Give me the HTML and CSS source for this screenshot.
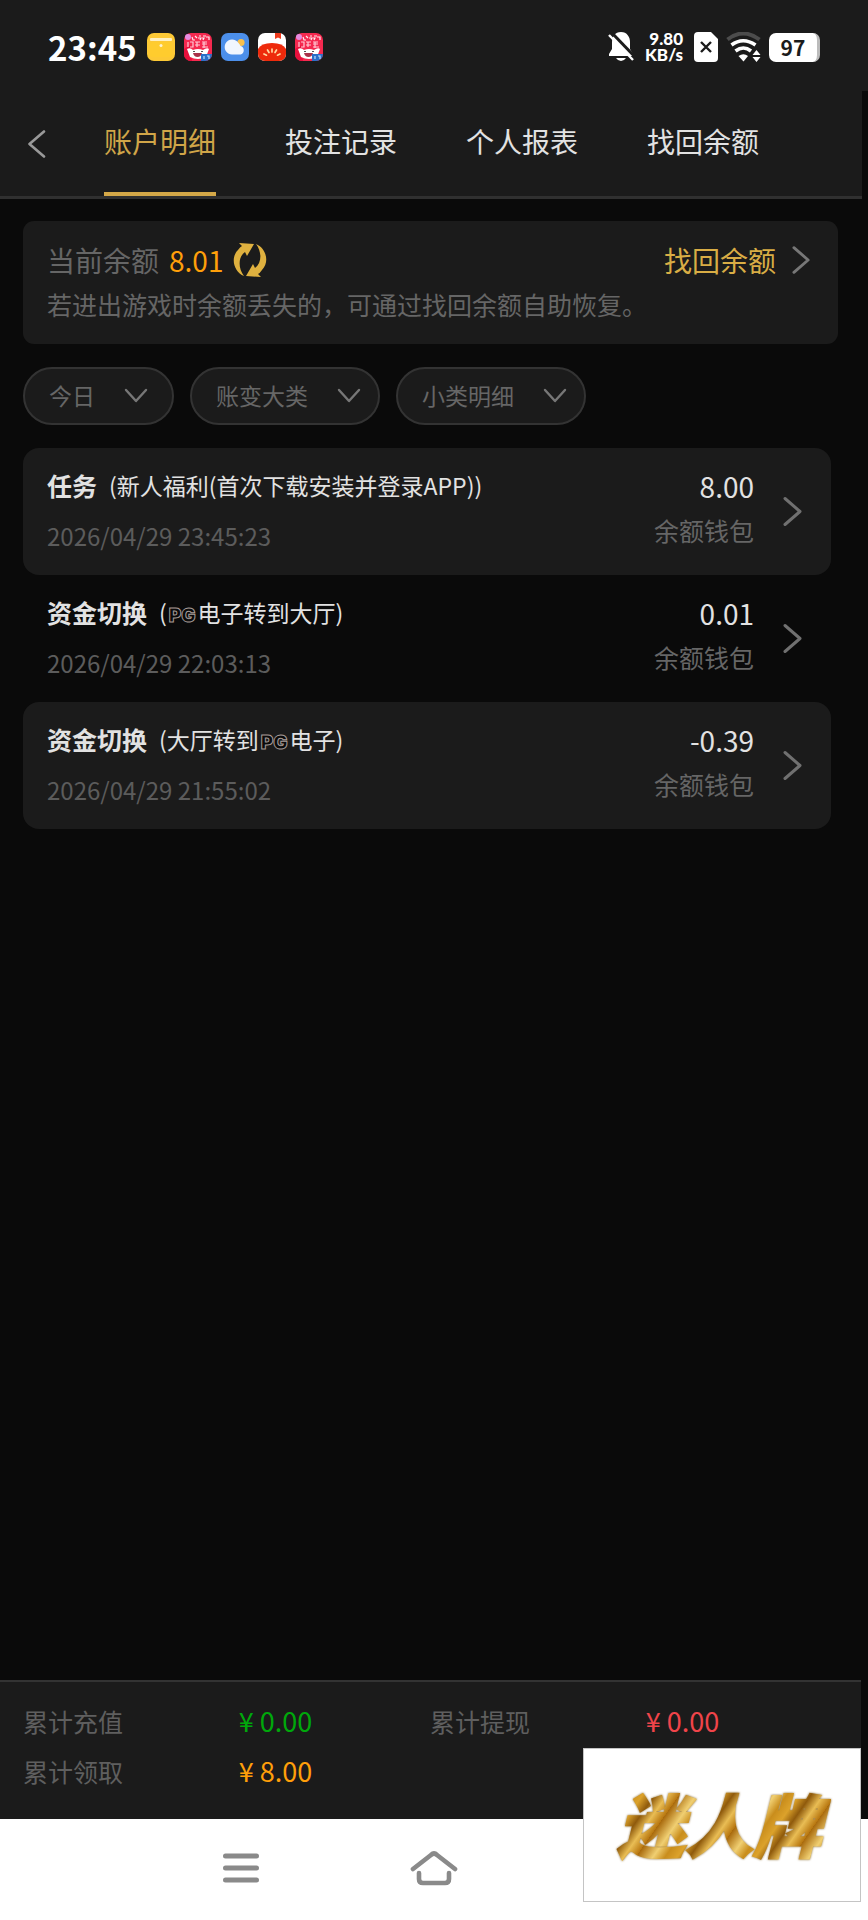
FILE: index.html
```html
<!DOCTYPE html>
<html lang="zh-CN">
<head>
  <meta charset="UTF-8">
  <meta name="viewport" content="width=device-width, initial-scale=1.0">
  <title>账户明细</title>
  <link rel="stylesheet" href="styles.css">
</head>
<body>

  <!-- Icons used more than once -->
  <svg class="sprite" aria-hidden="true">
    <symbol id="right" viewBox="0 0 20 30">
      <path d="M2 2 L17 15 L2 28" fill="none" stroke="currentColor" stroke-width="3" stroke-linecap="round" stroke-linejoin="round"/>
    </symbol>
    <symbol id="down" viewBox="0 0 24 16">
      <path d="M2 2 L12 13 L22 2" fill="none" stroke="currentColor" stroke-width="2.4" stroke-linecap="round" stroke-linejoin="round"/>
    </symbol>
    <symbol id="promo" viewBox="0 0 28 28">
      <rect width="28" height="28" rx="7" fill="#f5294f"/>
      <path d="M0 16 L6 12 L8 28 H7 A7 7 0 0 1 0 21 Z" fill="#e8103c"/>
      <circle cx="4" cy="4" r="3" fill="#e58be0"/>
      <path d="M8 4 l1 3 h2 M11 3 l2 2 M15 3 h2 M14 5 h3 l-1 2 M19 3 h3 M18 5 h2 l-1 2 M22 4 h3 v3" stroke="#ffe9ee" stroke-width="1.2" fill="none"/>
      <path d="M4 9 v5 M6 9 h3 v5 h-3 M11 9 h5 M11 12 h5 M13 9 v5 M18 9 h5 M18 11 h5 M20 9 v6 M18 14 h6" stroke="#ffc9d4" stroke-width="1.2" fill="none"/>
      <path d="M3 16 Q6 14 9 17 Q14 15 19 17 Q23 14 25 16 L22 24 Q14 28 6 24 Z" fill="#fff"/>
      <path d="M9 18.500 h2 M17 18.500 h2" stroke="#555" stroke-width="1.2"/>
      <path d="M9 20 h9 q-1 4 -4.500 4 t-4.500 -4 Z" fill="#a8324a"/>
      <path d="M17 21 H28 A7 7 0 0 1 21 28 H17 Z" fill="#2a6fc9"/>
      <path d="M20 23 v3 M23 23 h2 v3" stroke="#bfe0ff" stroke-width="1.2" fill="none"/>
    </symbol>
  </svg>

  <!-- Phone status bar -->
  <div class="statusbar">
    <div class="status-left">
      <span class="clock">23:45</span>
      <div class="apps">
        <svg width="28" height="28" viewBox="0 0 28 28">
          <rect width="28" height="28" rx="7" fill="#fdc935"/>
          <rect x="3" y="5" width="22" height="3" rx="1" fill="#fff0c2"/>
          <rect x="3" y="9" width="22" height="15" rx="2" fill="#ffcc2e"/>
          <circle cx="14" cy="12.500" r="1.500" fill="#fff3cf"/>
        </svg>
        <svg width="28" height="28"><use href="#promo"/></svg>
        <svg width="28" height="28" viewBox="0 0 28 28">
          <rect width="28" height="28" rx="7" fill="#4c8fea"/>
          <circle cx="20" cy="9.500" r="3.600" fill="#f9c04d"/>
          <path d="M11 21.500 A7.500 7.500 0 1 1 17.500 10 Q19 11.500 19.500 13 A4.400 4.400 0 0 1 19.500 21.500 Z" fill="#f1f6fe"/>
        </svg>
        <svg width="28" height="28" viewBox="0 0 28 28">
          <rect width="28" height="28" rx="7" fill="#fff"/>
          <path d="M0 16 Q3 10 14 10 Q25 10 28 16 V21 A7 7 0 0 1 21 28 H7 A7 7 0 0 1 0 21 Z" fill="#ee2a0b"/>
          <path d="M17 0 H23 V6 L20 4.500 L17 6 Z" fill="#ee3a1c"/>
          <path d="M14 16 v3 M9.500 17 l1.500 2.500 M18.500 17 l-1.500 2.500 M6 21 l2.500 1.200 M22 21 l-2.500 1.200" stroke="#ffd9a0" stroke-width="1.700" stroke-linecap="round"/>
        </svg>
        <svg width="28" height="28"><use href="#promo"/></svg>
      </div>
    </div>
    <div class="status-right">
      <svg width="26" height="30" viewBox="0 0 26 30">
        <path d="M13 0 C19 0 22 5 22 10 V17 L25 22 V24 H1 V22 L4 17 V10 C4 5 7 0 13 0 Z M8 26 H18 Q16 29 13 29 T8 26 Z" fill="#fff"/>
        <path d="M3 0 L28 26" stroke="#1b1b1b" stroke-width="3"/>
        <path d="M1 3 L25 28" stroke="#fff" stroke-width="2.400"/>
      </svg>
      <div class="speed">
        <span>9.80</span>
        <span>KB/s</span>
      </div>
      <svg width="24" height="30" viewBox="0 0 24 30">
        <path d="M4 0 H17 L24 7 V26 A4 4 0 0 1 20 30 H4 A4 4 0 0 1 0 26 V4 A4 4 0 0 1 4 0 Z" fill="#fff"/>
        <path d="M7 10 L17 20 M17 10 L7 20" stroke="#1b1b1b" stroke-width="2.400"/>
      </svg>
      <svg class="wifi" width="35" height="30" viewBox="0 0 35 30" fill="none">
        <path d="M1.500 7.500 Q17 -4.500 33.500 7.500" stroke="#4c4c4c" stroke-width="4"/>
        <path d="M5.500 13 Q17 4.500 29.500 13" stroke="#fff" stroke-width="3.600"/>
        <path d="M9.500 19 Q17.500 13 25 19" stroke="#fff" stroke-width="3.600"/>
        <path d="M12.500 24 Q17.500 20.500 22 24 L17.500 29.500 Z" fill="#fff"/>
        <path d="M30.500 18 L34.500 23 H26.500 Z M30.500 30 L34.500 25 H26.500 Z" fill="#fff"/>
      </svg>
      <span class="battery">97</span>
    </div>
  </div>

  <!-- Page header with tabs -->
  <header class="header">
    <button class="back" type="button" aria-label="返回">
      <svg width="18" height="28" viewBox="0 0 18 28">
        <path d="M16 1.500 L1.500 14 L16 26.500" fill="none" stroke="currentColor" stroke-width="2.600" stroke-linecap="round" stroke-linejoin="round"/>
      </svg>
    </button>
    <nav class="tabs">
      <a class="tab active" href="#">账户明细</a>
      <a class="tab" href="#">投注记录</a>
      <a class="tab" href="#">个人报表</a>
      <a class="tab" href="#">找回余额</a>
    </nav>
  </header>

  <main class="content">
    <section class="balance">
      <div class="balance-top">
        <span class="balance-label">当前余额</span>
        <span class="balance-value">8.01</span>
        <button class="refresh" type="button" aria-label="刷新">
          <svg width="34" height="36" viewBox="0 0 34 36" fill="#dfb13f">
            <path d="M11 34 C1 30 -3 16 5 8 Q7 5 9 4 L6 1 L21 2 L14 14 L12 10 C5 15 5 26 11 34 Z"/>
            <path d="M23 2 C33 6 37 20 29 28 Q27 31 25 32 L28 35 L13 34 L20 22 L22 26 C29 21 29 10 23 2 Z"/>
          </svg>
        </button>
        <a class="recover" href="#">找回余额 <svg width="19" height="30"><use href="#right"/></svg></a>
      </div>
      <p class="balance-note">若进出游戏时余额丢失的，可通过找回余额自助恢复。</p>
    </section>

    <form class="filters">
      <div class="filter filter-date">
        <select aria-label="日期"><option>今日</option></select>
        <svg width="24" height="16"><use href="#down"/></svg>
      </div>
      <div class="filter">
        <select aria-label="账变大类"><option>账变大类</option></select>
        <svg width="24" height="16"><use href="#down"/></svg>
      </div>
      <div class="filter">
        <select aria-label="小类明细"><option>小类明细</option></select>
        <svg width="24" height="16"><use href="#down"/></svg>
      </div>
    </form>

    <ul class="records">
      <li>
        <a class="record" href="#">
          <div class="record-info">
            <div class="record-title"><strong>任务</strong><span>(新人福利(首次下载安装并登录APP))</span></div>
            <time>2026/04/29 23:45:23</time>
          </div>
          <div class="record-sum">
            <span class="record-amount">8.00</span>
            <span class="record-wallet">余额钱包</span>
          </div>
          <svg width="20" height="31"><use href="#right"/></svg>
        </a>
      </li>
      <li>
        <a class="record" href="#">
          <div class="record-info">
            <div class="record-title"><strong>资金切换</strong><span>(<span class="pg">PG</span>电子转到大厅)</span></div>
            <time>2026/04/29 22:03:13</time>
          </div>
          <div class="record-sum">
            <span class="record-amount">0.01</span>
            <span class="record-wallet">余额钱包</span>
          </div>
          <svg width="20" height="31"><use href="#right"/></svg>
        </a>
      </li>
      <li>
        <a class="record" href="#">
          <div class="record-info">
            <div class="record-title"><strong>资金切换</strong><span>(大厅转到<span class="pg">PG</span>电子)</span></div>
            <time>2026/04/29 21:55:02</time>
          </div>
          <div class="record-sum">
            <span class="record-amount">-0.39</span>
            <span class="record-wallet">余额钱包</span>
          </div>
          <svg width="20" height="31"><use href="#right"/></svg>
        </a>
      </li>
    </ul>
  </main>

  <!-- Totals -->
  <div class="bottom">
    <dl class="totals">
      <div><dt>累计充值</dt><dd class="green">¥ 0.00</dd></div>
      <div><dt>累计提现</dt><dd class="red">¥ 0.00</dd></div>
      <div><dt>累计领取</dt><dd class="orange">¥ 8.00</dd></div>
    </dl>
  </div>

  <!-- Phone navigation -->
  <nav class="phone-nav">
    <button type="button" aria-label="菜单">
      <svg width="36" height="30" viewBox="0 0 36 30">
        <path d="M2.500 3 H33.500 M2.500 15 H33.500 M2.500 27 H33.500" stroke="#8a8a8a" stroke-width="5" stroke-linecap="round"/>
      </svg>
    </button>
    <button type="button" aria-label="主页">
      <svg width="48" height="36" viewBox="0 0 48 36" fill="none" stroke="#8a8a8a" stroke-width="4.600" stroke-linecap="round" stroke-linejoin="round">
        <path d="M3 19 L21 5 Q24 2 27 5 L45 19"/>
        <path d="M9 23 V29 Q9 33 13 33 H35 Q39 33 39 29 V23"/>
      </svg>
    </button>
  </nav>

  <div class="brand"><span>迷人牌</span></div>

</body>
</html>
```

FILE: styles.css
```css
* {
  box-sizing: border-box;
}

body {
  margin: 0;
  min-height: 100vh;
  position: relative;
  display: flex;
  flex-direction: column;
  background-color: #0a0a0a;
  color: #e2e2e2;
  font-family: "Noto Sans CJK SC", sans-serif;
  font-size: 25px;
}

a {
  color: inherit;
  text-decoration: none;
}

button {
  padding: 0;
  border: none;
  background: none;
  color: inherit;
  cursor: pointer;
}

svg {
  display: block;
  flex-shrink: 0;
}

.sprite {
  position: absolute;
  width: 0;
  height: 0;
}

/* status bar */
.statusbar {
  display: flex;
  justify-content: space-between;
  padding: 31px 48px 28px;
  background-color: #1b1b1b;
  color: #fff;
  font-weight: bold;
}

.status-left, .status-right {
  display: flex;
  align-items: center;
  height: 32px;
}

.status-left {
  gap: 10px;
}

.clock {
  font-size: 33px;
  line-height: 32px;
}

.apps {
  display: flex;
  gap: 9px;
}

.status-right {
  gap: 11px;
}

.speed {
  display: flex;
  flex-direction: column;
  align-items: flex-end;
  font-family: Lato, sans-serif;
  font-size: 17px;
  font-weight: 900;
  line-height: 16px;
}

.wifi {
  margin: 0 -3px;
}

.battery {
  width: 51px;
  height: 29px;
  border-right: 3px solid #bbb;
  border-radius: 7px;
  background-color: #fff;
  color: #1b1b1b;
  font-size: 21px;
  line-height: 28px;
  text-align: center;
}

/* header */
.header {
  display: flex;
  margin-right: 6px;
  padding-left: 28px;
  border-bottom: 3px solid #303030;
  background-color: #1b1b1b;
}

.back {
  width: 76px;
  color: #999;
}

.tabs {
  display: flex;
  gap: 69px;
}

.tab {
  padding: 28px 0 29px;
  border-bottom: 4px solid transparent;
  font-size: 28px;
  line-height: 44px;
}

.active {
  border-color: #d4a848;
  color: #d0a548;
}

/* content */
.content {
  flex: 1;
  padding: 22px 30px 24px 23px;
}

.balance {
  padding: 18px 24px 20px;
  border-radius: 11px;
  background-color: #1b1b1b;
  color: #666;
}

.balance-top {
  display: flex;
  align-items: center;
  font-size: 28px;
  line-height: 42px;
}

.balance-value {
  margin: 0 10px;
  color: #ff9f0a;
}

.recover {
  display: flex;
  align-items: center;
  gap: 16px;
  margin-left: auto;
  margin-right: 3px;
  color: #d9ad45;
}

.recover svg {
  color: #777;
}

.balance-note {
  margin: 3px 0 0;
  line-height: 40px;
}

.filters {
  display: flex;
  gap: 16px;
  margin: 23px 0;
}

.filter {
  display: grid;
  align-items: center;
  color: #777;
}

.filter select {
  grid-area: 1 / 1;
  height: 58px;
  padding: 0 70px 2px 24px;
  border: 2px solid #333;
  border-radius: 29px;
  appearance: none;
  background-color: #1b1b1b;
  color: #666;
  font: inherit;
  font-size: 23px;
}

.filter svg {
  grid-area: 1 / 1;
  justify-self: end;
  margin-right: 19px;
  pointer-events: none;
}

.filter-date select {
  padding-right: 77px;
}

.filter-date svg {
  margin-right: 26px;
}

.records {
  margin: 0 7px 0 0;
  padding: 0;
  list-style: none;
}

.records li {
  border-radius: 16px;
}

.records li:nth-child(odd) {
  background-color: #1b1b1b;
}

.record {
  display: flex;
  align-items: center;
  padding: 19px 28px 19px 24px;
}

.record svg {
  margin-left: 29px;
  color: #707070;
}

.record-info {
  flex: 1;
  padding-bottom: 4px;
}

.record-title {
  display: flex;
  gap: 12px;
  margin-bottom: 17px;
  font-size: 23px;
  line-height: 36px;
}

.record-title strong {
  font-size: 25px;
}

.record time {
  display: block;
  color: #5c5c5c;
  font-size: 24px;
  line-height: 32px;
}

.pg {
  padding: 0 2px;
  color: #0a0a0a;
  font-family: Inter, sans-serif;
  font-size: 19px;
  font-weight: 900;
  line-height: 1;
  -webkit-text-stroke: 1px #a79c98;
}

.record-sum {
  display: flex;
  flex-direction: column;
  align-self: flex-start;
  gap: 9px;
  text-align: right;
}

.record-amount {
  font-size: 28px;
  line-height: 38px;
}

.record-wallet {
  color: #666;
  line-height: 32px;
}

/* totals */
.bottom {
  margin-right: 7px;
  padding: 14px 24px 23px 23px;
  border-top: 2px solid #333;
  background-color: #1b1b1b;
}

.totals {
  display: grid;
  grid-template-columns: 1fr 1fr;
  margin: 0;
  line-height: 50px;
}

.totals div {
  display: grid;
  grid-template-columns: 53% 1fr;
}

.totals dt {
  color: #5f5f5f;
}

.totals dd {
  margin: 0;
  font-size: 27px;
}

.green {
  color: #00a80b;
}

.red {
  color: #f0444a;
}

.orange {
  color: #ff9f0a;
}

/* phone navigation */
.phone-nav {
  display: grid;
  grid-template-columns: repeat(3, 193px);
  justify-content: center;
  height: 101px;
  padding-bottom: 3px;
  background-color: #fff;
}

.phone-nav button {
  display: flex;
  align-items: center;
  justify-content: center;
}

/* floating brand label */
.brand {
  position: absolute;
  right: 7px;
  bottom: 18px;
  display: flex;
  align-items: center;
  justify-content: center;
  width: 278px;
  height: 154px;
  border: 1px solid #c4c4c4;
  background-color: #fff;
}

.brand span {
  padding: 0 10px 4px 4px;
  background: repeating-linear-gradient(125deg, #a8690c 0, #f0cf72 14px, #c98d1c 24px, #dca22b 34px, #8f5a0c 44px, #e9bd54 54px, #b87710 64px);
  background-clip: text;
  -webkit-background-clip: text;
  color: transparent;
  font-size: 68px;
  font-style: italic;
  font-weight: 900;
  line-height: 90px;
  -webkit-text-stroke: 2px transparent;
  filter: drop-shadow(0 0 1px #8a6a2c);
}
```
